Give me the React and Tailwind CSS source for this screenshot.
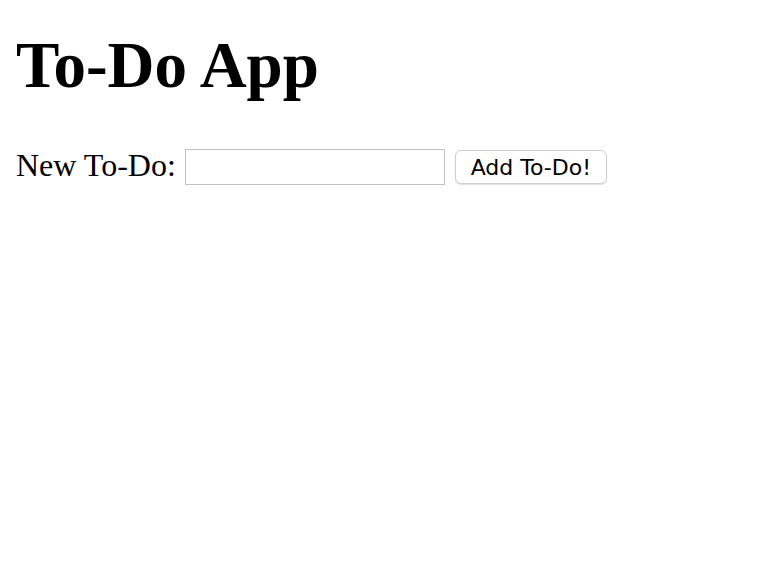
export default function App() {
  return (
    <div className="min-h-screen bg-white px-[16px] pt-[28px] text-black">
      <h1 className="m-0 text-[65px] font-bold leading-[74px] [font-family:'Liberation_Serif',serif]">
        To-Do App
      </h1>
      <div className="mt-[43px] flex items-start">
        <label className="mt-[2px] text-[32px] leading-[37px] [font-family:'Liberation_Serif',serif] whitespace-nowrap">
          New To-Do:
        </label>
        <input
          type="text"
          className="ml-[9px] mt-[4px] h-[36px] w-[260px] border border-[#c2c2c2] bg-white px-1 outline-none"
        />
        <button className="ml-[10px] mt-[5px] flex h-[34px] w-[152px] items-center justify-center rounded-[6px] border border-[#cfcfcf] bg-white pt-[2px] text-[22px] leading-none text-black shadow-[0_1px_1px_rgba(0,0,0,0.12)] [font-family:'DejaVu_Sans',sans-serif]">
          Add To-Do!
        </button>
      </div>
    </div>
  );
}
